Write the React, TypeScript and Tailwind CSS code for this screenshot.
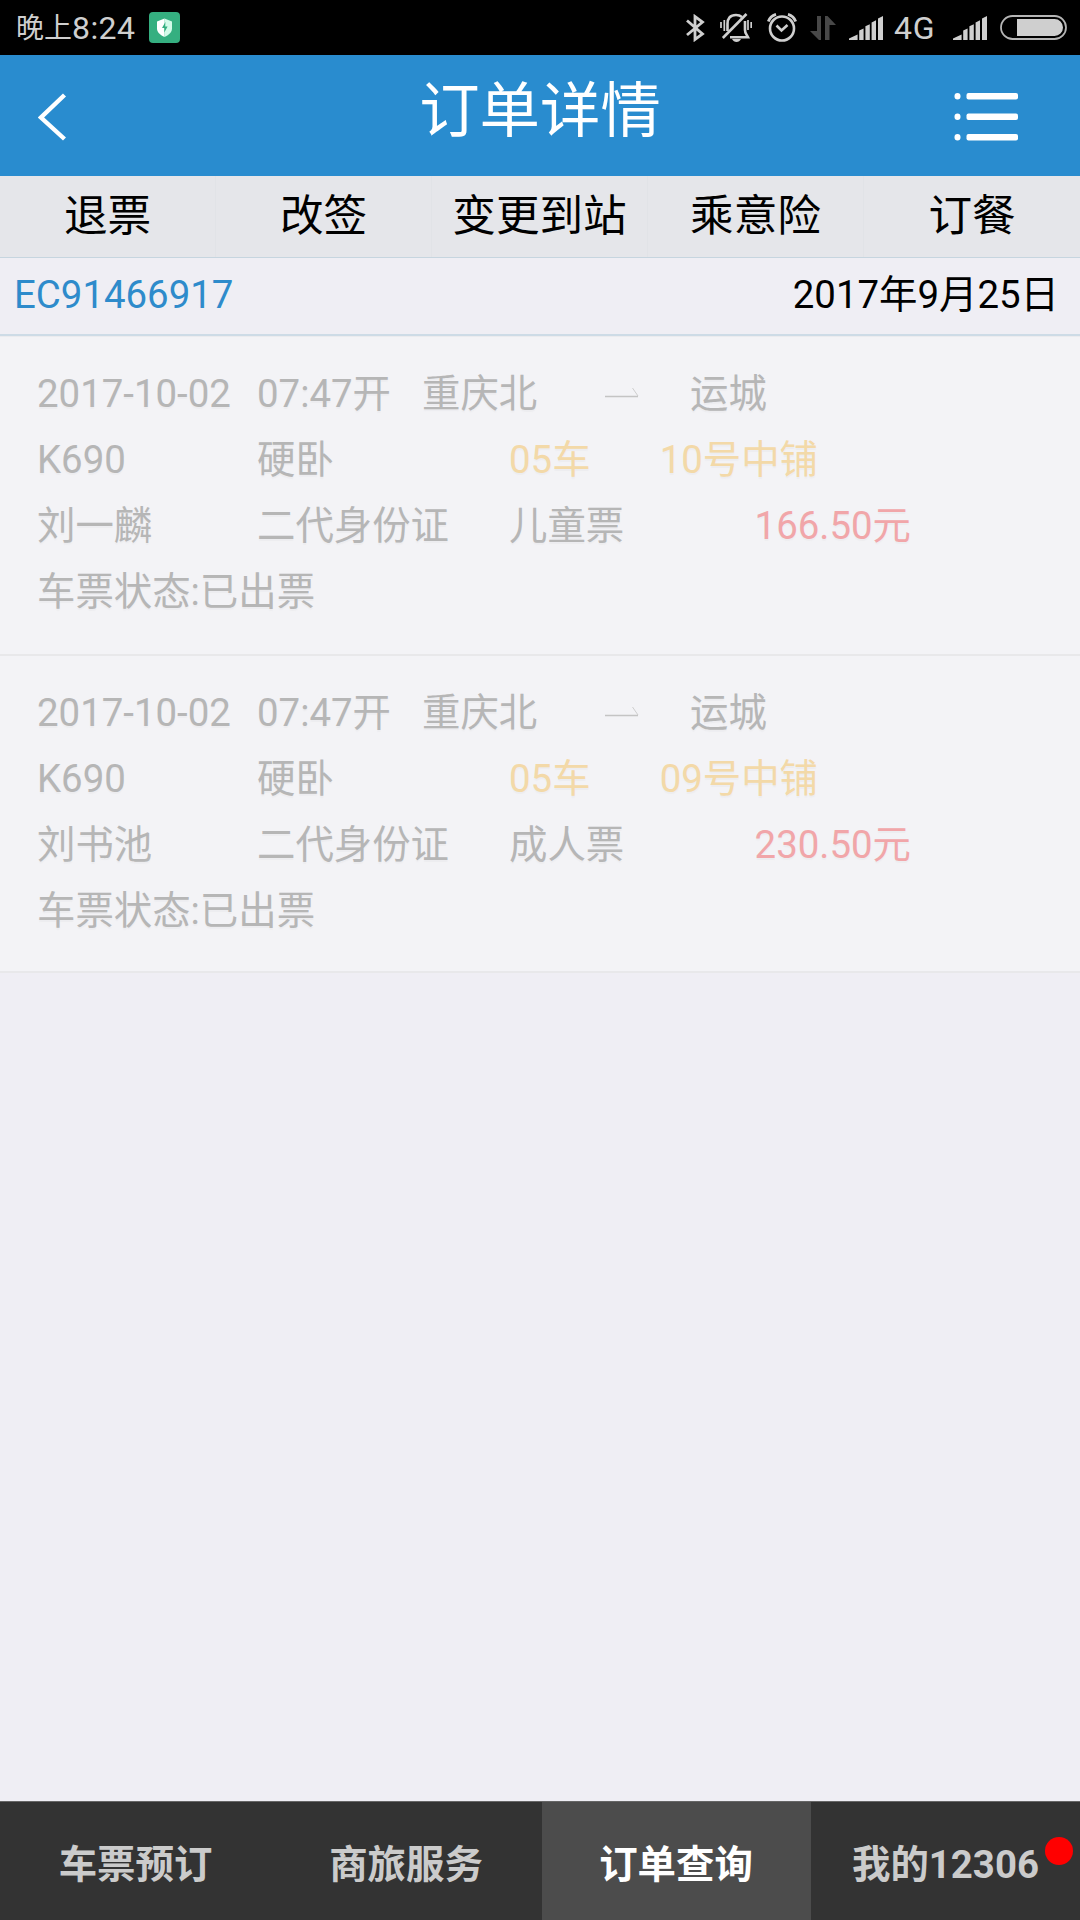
import React from "react";

type Ticket = { seat: string; name: string; kind: string; price: string };

const tickets: Ticket[] = [
  { seat: "10号中铺", name: "刘一麟", kind: "儿童票", price: "166.50元" },
  { seat: "09号中铺", name: "刘书池", kind: "成人票", price: "230.50元" },
];

const actions = ["退票", "改签", "变更到站", "乘意险", "订餐"];

function Signal({ className }: { className: string }) {
  return (
    <svg className={className} width="34" height="24" viewBox="0 0 34 24" fill="#cfcfcf">
      <path d="M0 24V22.4L8.6 18.6V24ZM10.2 24V14.6L14.6 12.6V24ZM16.4 24V10.2L20.8 8.2V24ZM22.6 24V6.6L27 4.2V24ZM29 24V2.6L34 0V24Z" />
    </svg>
  );
}

function StatusBar() {
  return (
    <div className="flex h-[55px] items-center bg-black text-[#cfcfcf]">
      <div className="ml-[16px] flex h-[55px] w-[133px] items-center pt-[2px] whitespace-nowrap leading-[55px]">
        <span className="text-[28px]">晚上</span>
        <span className="text-[32px] tracking-[0.4px]">8:24</span>
      </div>
      <svg className="h-[31px] w-[31px]" viewBox="0 0 31 31">
        <rect width="31" height="31" rx="4" fill="#35af80" />
        <path d="M15.5 6.5L23 9.5V16.5C23 20.5 19.5 23 15.5 25Z" fill="#d3fbe9" />
        <path d="M15.5 6.5L8 9.5V16.5C8 20.5 11.5 23 15.5 25Z" fill="#fff" />
        <path d="M16.4 10L13 16H15.3V20.5L18.6 14.6H16.2Z" fill="#35af80" />
      </svg>
      <svg className="ml-[506px]" width="19" height="28" viewBox="0 0 19 28" fill="none" stroke="#cfcfcf" strokeWidth="2.8">
        <path d="M1 6.5L16.500 20L9 25.500V2.500L16.500 8L1 21" />
      </svg>
      <svg className="ml-[15px]" width="32" height="29" viewBox="0 0 32 29" fill="none" stroke="#cfcfcf">
        <path d="M7.5 18V11C7.5 5.5 10 2 16 2C18.5 2 20.5 2.8 22 4M25 8V17C25 20.5 26.5 21 28 24.3H10" strokeWidth="2.6" />
        <path d="M2.8 25L26.5 1" strokeWidth="2.6" />
        <path d="M1 9V15M4.3 7V18M28 7V17M31.200 9V15" strokeWidth="1.7" />
        <path d="M12 26H21C20 28 18.5 29 16.5 29S13 28 12 26Z" fill="#cfcfcf" stroke="none" />
      </svg>
      <svg className="ml-[15px]" width="30" height="29" viewBox="0 0 30 29" fill="none" stroke="#cfcfcf" strokeWidth="2.6">
        <circle cx="15" cy="15.5" r="12" />
        <path d="M9.5 12.5L14.5 17.5L20.5 12" />
        <path d="M1.3 8.500C2.5 5 5 2.5 9 1.3M28.7 8.500C27.5 5 25 2.5 21 1.3" strokeWidth="2.8" />
      </svg>
      <svg className="ml-[13px]" width="26" height="24" viewBox="0 0 26 24" fill="#484848">
        <path d="M7 0H11V24H9L0 15H7ZM15 0H17.5L26 9H19.5V24H15Z" />
      </svg>
      <Signal className="ml-[13px]" />
      <span className="ml-[11px] w-[42px] pt-[2px] text-[32px] leading-[53px] tracking-[0.7px]">4G</span>
      <Signal className="ml-[17px]" />
      <svg className="ml-[13px]" width="67" height="25" viewBox="0 0 67 25">
        <rect x="1" y="1" width="65" height="23" rx="11.5" fill="none" stroke="#b5b5b5" strokeWidth="1.8" />
        <path d="M17 4H54.5A8.5 8.5 0 0 1 54.5 21H17Z" fill="#cfcfcf" />
      </svg>
    </div>
  );
}

function Header() {
  return (
    <div className="flex h-[121px] items-center justify-between bg-[#298ccf] pt-[2px] pr-[62px] pl-[38px]">
      <svg width="80" height="48" viewBox="0 0 80 48" fill="none" stroke="#fff" strokeWidth="4.4">
        <path d="M26.5 2L3 24.5L26.5 46" />
      </svg>
      <h1 className="-mt-[10px] ml-[8px] text-[60.4px] leading-[90px] text-white">订单详情</h1>
      <svg width="64" height="48" viewBox="0 0 64 48" fill="#fff">
        <rect x="0.5" y="0" width="6" height="6.5" rx="3" />
        <rect x="12.5" y="0" width="51.5" height="6.5" rx="2" />
        <rect x="0.5" y="20.5" width="6" height="6.5" rx="3" />
        <rect x="12.5" y="20.5" width="51.5" height="6.5" rx="2" />
        <rect x="0.5" y="41" width="6" height="6.5" rx="3" />
        <rect x="12.5" y="41" width="51.5" height="6.5" rx="2" />
      </svg>
    </div>
  );
}

function TicketCard({ t }: { t: Ticket }) {
  return (
    <div className="h-[319px] border-b-2 border-[#e8e8ea] bg-[#f3f3f6] pt-[24px] pl-[37px] text-[#b6b6b6] [text-shadow:0_2px_1px_#ededf0] last:h-[317px]">
      <div className="flex h-[66px] items-center">
        <span className="w-[220px]">2017-10-02</span>
        <span className="w-[165px]">07:47开</span>
        <span className="w-[183px]">重庆北</span>
        <svg className="mb-[5px] w-[34px]" height="12" viewBox="0 0 34 12" fill="none" stroke="#c4c4c4">
          <path d="M0 10.5H33" strokeWidth="1.5" />
          <path d="M27.5 2L33 10" strokeWidth="0.8" />
        </svg>
        <span className="ml-[51px]">运城</span>
      </div>
      <div className="flex h-[66px] items-center">
        <span className="w-[220px]">K690</span>
        <span className="w-[252px]">硬卧</span>
        <span className="w-[100px] text-[#f3d9a8]">05车</span>
        <span className="w-[209px] text-right text-[#f3d9a8]">{t.seat}</span>
      </div>
      <div className="flex h-[66px] items-center">
        <span className="w-[220px]">{t.name}</span>
        <span className="w-[252px]">二代身份证</span>
        <span className="w-[150px]">{t.kind}</span>
        <span className="w-[252px] text-right text-[#f1a6a9]">{t.price}</span>
      </div>
      <div className="flex h-[66px] items-center">车票状态:已出票</div>
    </div>
  );
}

function BottomBar() {
  return (
    <div className="flex h-[119px] border-t border-[#666] bg-[#333] text-[38.4px] font-bold text-[#cbcbcb]">
      <div className="flex w-[271px] items-center justify-center pt-[7px]">车票预订</div>
      <div className="flex w-[271px] items-center justify-center pt-[7px] pr-[1px]">商旅服务</div>
      <div className="flex w-[269px] items-center justify-center bg-[#4c4c4c] pt-[7px] pr-[1px] text-white">订单查询</div>
      <div className="relative flex w-[269px] items-center justify-center pt-[7px]">
        我的12306
        <span className="absolute top-[35px] right-[7px] h-[28px] w-[28px] rounded-full bg-[#ff0000]" />
      </div>
    </div>
  );
}

export default function App() {
  return (
    <div className="flex h-[1920px] w-[1080px] flex-col overflow-hidden bg-[#efeef4] font-[Roboto,'Noto_Sans_CJK_SC',sans-serif] text-[38.4px]">
      <StatusBar />
      <Header />
      <div className="grid h-[82px] grid-cols-5 border-b border-[#c6d5df] bg-[#e5e6ea] text-[43.6px] text-black">
        {actions.map((a) => (
          <div key={a} className="flex items-center justify-center border-r border-[#e1e3e7] leading-[60px] last:border-r-0">
            {a}
          </div>
        ))}
      </div>
      <div className="flex h-[78px] items-center justify-between border-b-2 border-[#cddbe6] pr-[21px] pb-[2px] pl-[14px]">
        <span className="text-[#2e8bcb]">EC91466917</span>
        <span className="text-black">2017年9月25日</span>
      </div>
      <div className="border-t border-[#ebebee]">
        {tickets.map((t) => (
          <TicketCard key={t.name} t={t} />
        ))}
      </div>
      <div className="flex-1" />
      <BottomBar />
    </div>
  );
}
